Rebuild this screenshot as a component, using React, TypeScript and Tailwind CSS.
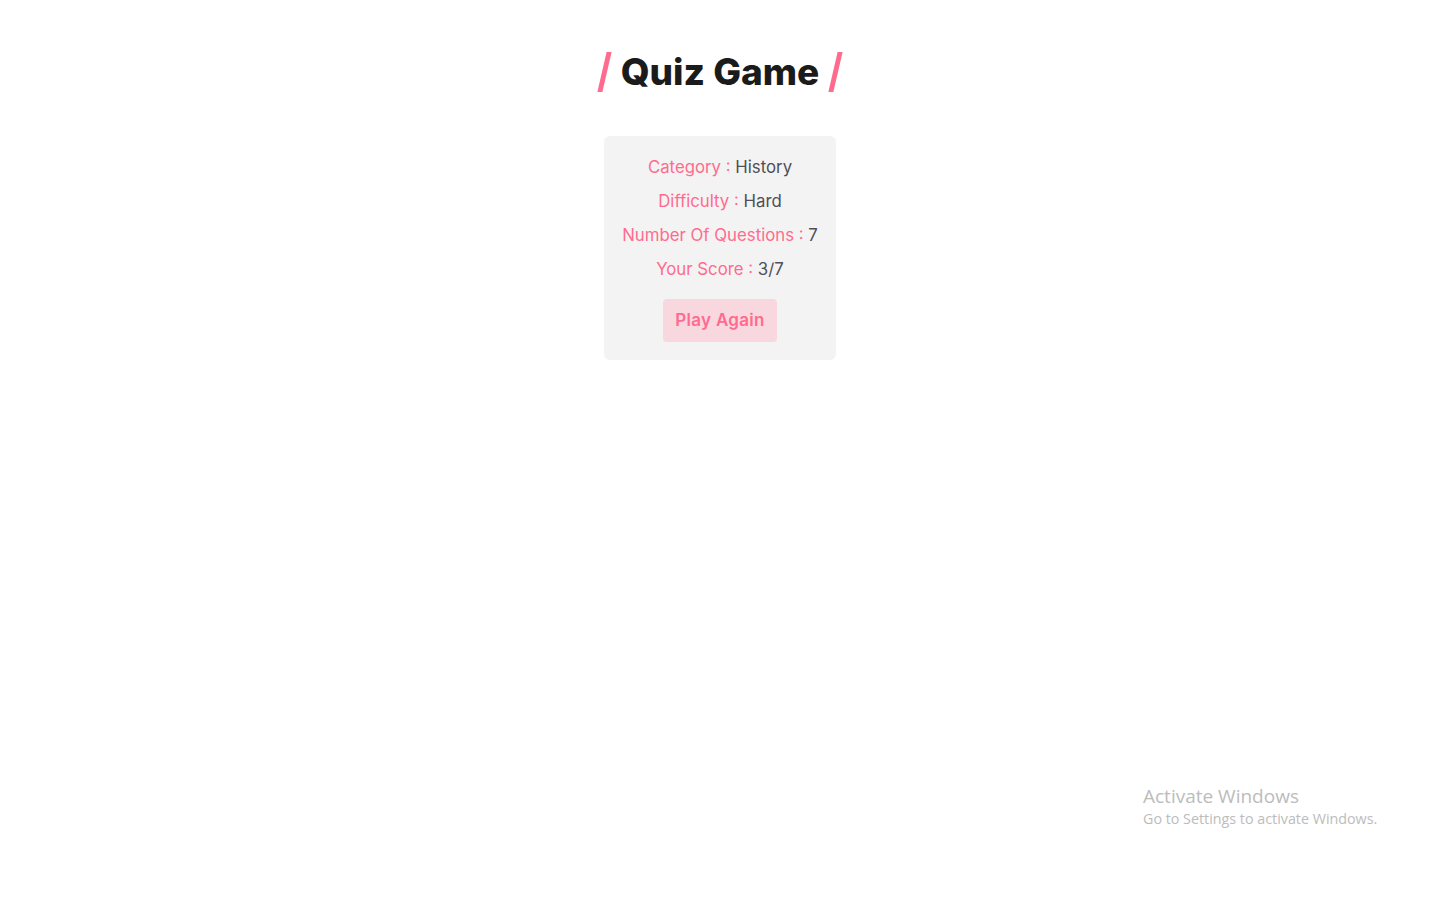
const rows = [
  { label: "Category", value: "History" },
  { label: "Difficulty", value: "Hard" },
  { label: "Number Of Questions", value: "7" },
  { label: "Your Score", value: "3/7" },
];

const Slash = () => (
  <span className="inline-block h-[40px] w-[4.5px] -skew-x-[13deg] bg-[#ff6b8e]" />
);

const App = () => {
  return (
    <div className="relative min-h-[899px] w-full bg-white font-['Inter',sans-serif]">
      <div className="flex flex-col items-center pt-[46px] pl-[4px]">
        <h1 className="flex items-center gap-[14px] text-[37px] font-extrabold leading-[52px] text-[#1b1b1b]">
          <Slash />
          <span>Quiz Game</span>
          <Slash />
        </h1>

        <div className="mt-[38px] flex w-[232px] flex-col items-center rounded-md bg-[#f3f3f3] px-[16px] pt-[14px] pb-[18px]">
          {rows.map((r) => (
            <p key={r.label} className="text-[16.8px] leading-[34px] whitespace-nowrap">
              <span className="text-[#ff6b8e]">{r.label} : </span>
              <span className="text-[#4f4f57]">{r.value}</span>
            </p>
          ))}
          <button className="mt-[13px] h-[43px] w-[114px] rounded-[4px] bg-[#f8d7df] text-[17px] font-semibold tracking-[0.3px] text-[#ff6b8e]">
            Play Again
          </button>
        </div>
      </div>

      <div className="absolute left-[1143px] top-[784px] font-['Open_Sans',sans-serif] text-[#bcbcbc]">
        <p className="text-[19px] leading-[24px]">Activate Windows</p>
        <p className="text-[14.3px] leading-[22px]">Go to Settings to activate Windows.</p>
      </div>
    </div>
  );
};

export default App;
